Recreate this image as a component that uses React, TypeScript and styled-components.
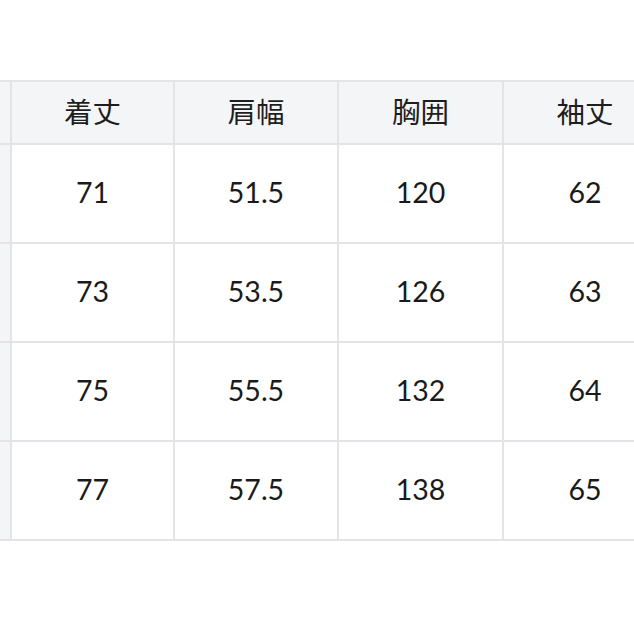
import styled, { createGlobalStyle } from 'styled-components';

const GlobalStyle = createGlobalStyle`
  html, body {
    margin: 0;
    padding: 0;
    background: #ffffff;
  }
  body {
    font-family: Lato, "Noto Sans CJK JP", sans-serif;
    color: #222222;
  }
`;

const Page = styled.div`
  width: 634px;
  height: 634px;
  overflow: hidden;
  padding-top: 80px;
  box-sizing: border-box;
`;

const Grid = styled.div`
  display: grid;
  grid-template-columns: 10px 161px 162px 163px 162px;
  grid-template-rows: 61px repeat(4, 97px);
  gap: 2px;
  padding: 2px 2px 2px 0;
  width: max-content;
  background: #e4e4e8;
`;

const HeadCell = styled.div`
  display: flex;
  align-items: center;
  justify-content: center;
  padding-bottom: 5px;
  background: #f4f5f7;
  font-family: "Noto Sans CJK JP", sans-serif;
  font-size: 28.5px;
  color: #1e1e1e;
`;

const SideCell = styled.div`
  background: #f4f5f7;
`;

const ValueCell = styled.div`
  display: flex;
  align-items: center;
  justify-content: center;
  padding-bottom: 4px;
  background: #ffffff;
  font-family: Lato, sans-serif;
  font-size: 28.5px;
  color: #1a1a1a;
`;

const headers = ['着丈', '肩幅', '胸囲', '袖丈'];
const rows = [
  ['71', '51.5', '120', '62'],
  ['73', '53.5', '126', '63'],
  ['75', '55.5', '132', '64'],
  ['77', '57.5', '138', '65'],
];

export default function App() {
  return (
    <>
      <GlobalStyle />
      <Page>
        <Grid>
          <HeadCell />
          {headers.map((h) => (
            <HeadCell key={h}>{h}</HeadCell>
          ))}
          {rows.map((r, i) => [
            <SideCell key={`s${i}`} />,
            ...r.map((v, j) => <ValueCell key={`${i}-${j}`}>{v}</ValueCell>),
          ])}
        </Grid>
      </Page>
    </>
  );
}
